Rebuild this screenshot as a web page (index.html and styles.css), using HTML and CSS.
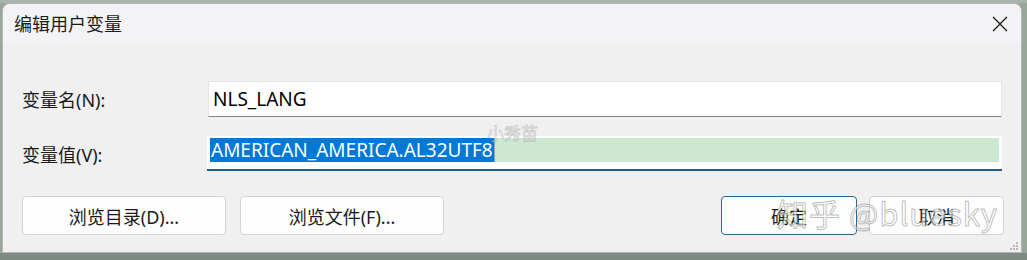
FILE: index.html
```html
<!DOCTYPE html>
<html lang="zh-CN">
<head>
<meta charset="utf-8">
<title>编辑用户变量</title>
<link rel="stylesheet" href="styles.css">
</head>
<body>
<div class="desk">
  <div class="window">
    <div class="titlebar">
      <span class="title">编辑用户变量</span>
      <svg class="close" width="16" height="16" viewBox="0 0 16 16"><path d="M1 1 L15 15 M15 1 L1 15" stroke="#1a1a1a" stroke-width="1.3" fill="none"/></svg>
    </div>
    <div class="content">
      <div class="row row-name">
        <label class="label">变量名(N):</label>
        <div class="field">NLS_LANG</div>
      </div>
      <div class="row row-value">
        <label class="label">变量值(V):</label>
        <div class="field focused">
          <div class="inner"><span class="sel">AMERICAN_AMERICA.AL32UTF8</span><span class="rest"></span></div>
        </div>
      </div>
      <div class="buttons">
        <button class="btn">浏览目录(D)...</button>
        <button class="btn">浏览文件(F)...</button>
        <span class="spacer"></span>
        <button class="btn primary">确定</button>
        <button class="btn">取消</button>
      </div>
    </div>
    <svg class="grip" width="9" height="9" viewBox="0 0 9 9"><g fill="#b8b8b8"><rect x="6" y="0" width="2" height="2"/><rect x="3" y="3" width="2" height="2"/><rect x="6" y="3" width="2" height="2"/><rect x="0" y="6" width="2" height="2"/><rect x="3" y="6" width="2" height="2"/><rect x="6" y="6" width="2" height="2"/></g></svg>
    <span class="wm-small">小秀苗</span>
    <span class="wm-big">知乎 @bluesky</span>
  </div>
</div>
</body>
</html>
```
FILE: styles.css
```css
html, body {
  margin: 0;
  padding: 0;
}
body {
  width: 1027px;
  height: 260px;
  overflow: hidden;
  background: #8e9a90;
  font-family: "Noto Sans", "Noto Sans CJK SC", sans-serif;
}
.desk {
  height: 260px;
  background: linear-gradient(#a9b5aa 0, #a9b5aa 3px, #9aa59b 3px, #9aa59b 253px, #7f8b82 253px);
  padding-top: 3px;
  padding-left: 2px;
  box-sizing: border-box;
}
.window {
  position: relative;
  width: 1020px;
  height: 250px;
  box-sizing: border-box;
  border: 1px solid #b5b5b5;
  border-radius: 8px 8px 0 0;
  background: #f0f0f0;
  overflow: hidden;
  display: flex;
  flex-direction: column;
}
.titlebar {
  height: 41px;
  flex: none;
  background: #f3f3f6;
  display: flex;
  align-items: center;
  padding-left: 11px;
  padding-right: 13px;
}
.title {
  font-family: "Noto Sans CJK SC", sans-serif;
  font-size: 18px;
  color: #1b1b1b;
  flex: 1;
  margin-top: -3px;
}
.close {
  display: block;
  margin-top: -2px;
}
.content {
  flex: 1;
  padding: 36px 17px 0 19px;
  display: flex;
  flex-direction: column;
}
.row {
  display: flex;
  align-items: center;
}
.label {
  width: 186px;
  flex: none;
  font-size: 18px;
  color: #1a1a1a;
}
.field {
  flex: 1;
  margin-right: 2px;
  background: #ffffff;
  box-sizing: border-box;
  font-size: 19px;
  color: #000;
}
.row-name .field {
  height: 36px;
  border: 1px solid #e6e6e6;
  border-bottom: 1px solid #868686;
  padding-left: 4px;
  display: flex;
  align-items: center;
}
.row-value {
  margin-top: 19px;
}
.row-value .field {
  height: 35px;
  border-bottom: 2px solid #205e8a;
  padding: 2px 3px 0 3px;
  margin-left: -1px;
}
.inner {
  height: 24px;
  display: flex;
  background: #cde8d0;
}
.sel {
  background: #0078d7;
  color: #ffffff;
  line-height: 24px;
  padding: 0 1px 0 1px;
  white-space: nowrap;
}
.rest {
  flex: 1;
  border-left: 1px solid #9aa39b;
}
.buttons {
  margin-top: 25px;
  display: flex;
}
.btn {
  height: 39px;
  box-sizing: border-box;
  border: 1px solid #d3d3d3;
  border-radius: 4px;
  background: #fdfdfd;
  font-family: "Noto Sans", "Noto Sans CJK SC", sans-serif;
  font-size: 18px;
  color: #1a1a1a;
  padding: 0;
  margin: 0;
}
.buttons .btn:nth-child(1) { width: 204px; }
.buttons .btn:nth-child(2) { width: 204px; margin-left: 14px; }
.spacer { flex: 1; }
.btn.primary {
  width: 136px;
  border-color: #2a6790;
}
.buttons .btn:nth-child(5) {
  width: 135px;
  margin-left: 12px;
}
.grip {
  position: absolute;
  right: 2px;
  bottom: 1px;
}
.wm-small {
  position: absolute;
  left: 484px;
  top: 116px;
  font-family: "Noto Sans CJK SC", sans-serif;
  font-size: 17px;
  color: rgba(255, 255, 255, 0.5);
  -webkit-text-stroke: 0.8px rgba(120, 120, 120, 0.35);
}
.wm-big {
  position: absolute;
  left: 774px;
  top: 186px;
  font-family: "Noto Sans CJK SC", sans-serif;
  font-size: 31px;
  letter-spacing: 1px;
  color: rgba(255, 255, 255, 0.6);
  -webkit-text-stroke: 1px rgba(110, 110, 110, 0.45);
  white-space: nowrap;
}
```
